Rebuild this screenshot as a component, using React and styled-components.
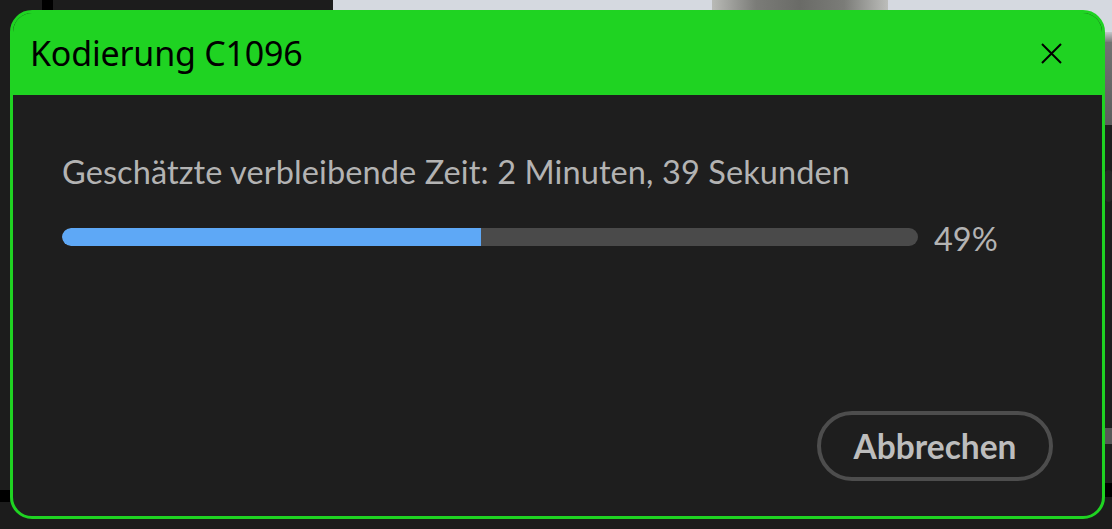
import React from "react";
import styled, { createGlobalStyle } from "styled-components";

const Global = createGlobalStyle`
  html, body { margin: 0; padding: 0; background: #1c1c1c; }
  body { width: 1112px; height: 529px; overflow: hidden; }
`;

const GREEN = "#1fd322";

const Desktop = styled.div`
  width: 1112px;
  height: 529px;
  display: grid;
  grid-template-columns: 10px 1095px 7px;
  grid-template-rows: 10px 509px 10px;
  background: #1c1c1c;
  overflow: hidden;
`;

const TopStrip = styled.div`
  grid-column: 1 / 4;
  grid-row: 1;
  display: flex;
`;

const Seg = styled.div`
  width: ${(p) => (p.$w ? `${p.$w}px` : "auto")};
  flex: ${(p) => (p.$w ? "none" : "1")};
  background: ${(p) => p.$bg};
`;

const LeftRail = styled.div`
  grid-column: 1;
  grid-row: 2 / 4;
  display: flex;
  flex-direction: column;
  padding-top: 480px;
`;

const RightRail = styled.div`
  grid-column: 3;
  grid-row: 2 / 4;
  display: flex;
  flex-direction: column;
`;

const RailPiece = styled.div`
  height: ${(p) => p.$h}px;
  flex: none;
  background: ${(p) => p.$bg};
  border-radius: ${(p) => p.$r || 0};
`;

const DialogCell = styled.div`
  grid-column: 2;
  grid-row: 2;
  background:
    linear-gradient(90deg, #1c1c1c 0 40%, #d5d9e0 40%) top / 100% 24px no-repeat,
    #1c1c1c;
  display: flex;
`;

const Dialog = styled.div`
  flex: 1;
  display: flex;
  flex-direction: column;
  border: 3px solid ${GREEN};
  border-radius: 22px;
  background: #1e1e1e;
  overflow: hidden;
`;

const Header = styled.div`
  height: 82px;
  flex: none;
  background: ${GREEN};
  display: flex;
  align-items: center;
  justify-content: space-between;
  padding: 0 40px 0 17px;
`;

const Title = styled.h1`
  margin: 0;
  margin-top: -2px;
  font-family: "Noto Sans", "Open Sans", sans-serif;
  font-weight: 400;
  font-size: 34px;
  color: #000;
  letter-spacing: -0.2px;
`;

const CloseButton = styled.button`
  background: none;
  border: none;
  padding: 0;
  width: 22px;
  height: 22px;
  display: flex;
  align-items: center;
  justify-content: center;
  margin-top: -2px;
`;

const Body = styled.div`
  flex: 1;
  display: flex;
  flex-direction: column;
  padding: 57px 49px 35px 49px;
`;

const Estimate = styled.p`
  margin: 0;
  font-family: Lato, "Open Sans", sans-serif;
  font-size: 32.5px;
  line-height: 40px;
  color: #b3b3b3;
  letter-spacing: 0.1px;
`;

const ProgressRow = styled.div`
  display: flex;
  align-items: center;
  gap: 16px;
  margin-top: 23px;
`;

const Track = styled.div`
  width: 856px;
  height: 18px;
  border-radius: 9px;
  background: #4a4a4a;
  overflow: hidden;
  display: flex;
`;

const Fill = styled.div`
  height: 100%;
  background: #5ea8f6;
  border-radius: 9px 0 0 9px;
`;

const Percent = styled.span`
  font-family: Lato, "Open Sans", sans-serif;
  font-size: 32.5px;
  color: #b3b3b3;
  margin-top: 4px;
`;

const Footer = styled.div`
  margin-top: auto;
  display: flex;
  justify-content: flex-end;
`;

const CancelButton = styled.button`
  width: 236px;
  height: 70px;
  border-radius: 35px;
  border: 4px solid #4d4d4d;
  background: transparent;
  color: #bdbdbd;
  font-family: Lato, "Open Sans", sans-serif;
  font-weight: 700;
  font-size: 33.5px;
  display: flex;
  align-items: center;
  justify-content: center;
  padding: 0;
`;

export default function App() {
  const progress = 49;
  return (
    <>
      <Global />
      <Desktop>
        <TopStrip>
          <Seg $w={42} $bg="#1c1c1c" />
          <Seg $w={11} $bg="#000" />
          <Seg $w={280} $bg="#1c1c1c" />
          <Seg $w={379} $bg="#d5d9e0" />
          <Seg
            $w={176}
            $bg="linear-gradient(90deg, #b9bab6 0%, #7b7c78 25%, #6a6b67 50%, #7b7c78 75%, #bcbdba 100%)"
          />
          <Seg $bg="#d5d9e0" />
        </TopStrip>
        <LeftRail>
          <RailPiece $h={12} $bg="#000" />
        </LeftRail>
        <DialogCell>
          <Dialog>
            <Header>
              <Title>Kodierung C1096</Title>
              <CloseButton aria-label="Schließen">
                <svg width="21" height="21" viewBox="0 0 21 21">
                  <path d="M1 1 L20 20 M20 1 L1 20" stroke="#000" strokeWidth="2" fill="none" />
                </svg>
              </CloseButton>
            </Header>
            <Body>
              <Estimate>Geschätzte verbleibende Zeit: 2 Minuten, 39 Sekunden</Estimate>
              <ProgressRow>
                <Track>
                  <Fill style={{ width: `${progress}%` }} />
                </Track>
                <Percent>{progress}%</Percent>
              </ProgressRow>
              <Footer>
                <CancelButton>Abbrechen</CancelButton>
              </Footer>
            </Body>
          </Dialog>
        </DialogCell>
        <RightRail>
          <RailPiece $h={22} $bg="#d5d9e0" />
          <RailPiece $h={10} $bg="linear-gradient(#c4c7cb, #7a7a7a)" />
          <RailPiece $h={83} $bg="linear-gradient(#727272, #5e5e5e)" />
          <RailPiece $h={45} $bg="#1e1e1e" />
          <RailPiece $h={32} $bg="#272727" $r="6px" />
          <RailPiece $h={226} $bg="#1e1e1e" />
          <RailPiece $h={16} $bg="#575757" />
          <RailPiece $h={39} $bg="#1e1e1e" />
          <RailPiece $h={14} $bg="#000" />
          <RailPiece $h={32} $bg="#1c1c1c" />
        </RightRail>
      </Desktop>
    </>
  );
}
